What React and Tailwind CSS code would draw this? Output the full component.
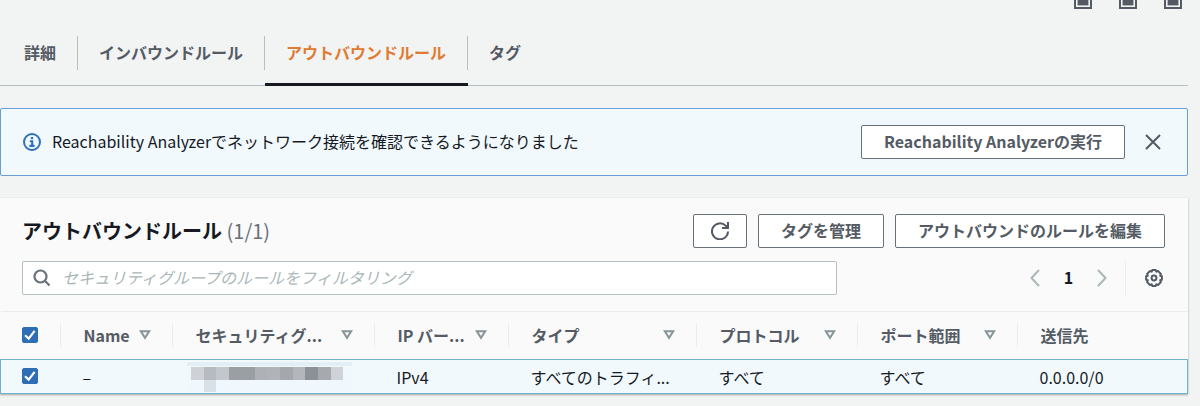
import React from "react";

const TABS = ["詳細", "インバウンドルール", "アウトバウンドルール", "タグ"];
const ACTIVE_TAB = 2;

const COLUMNS = [
  { label: "Name", width: "w-[112px]", sortable: true },
  { label: "セキュリティグ...", width: "w-[202px]", sortable: true },
  { label: "IP バー...", width: "w-[134px]", sortable: true },
  { label: "タイプ", width: "w-[188px]", sortable: true },
  { label: "プロトコル", width: "w-[161px]", sortable: true },
  { label: "ポート範囲", width: "w-[160px]", sortable: true },
  { label: "送信先", width: "w-auto", sortable: false },
];

const MOSAIC = [
  "#ced2d6", "#b6bbc1", "#c3c7cb", "#9a9fa4", "#9a9fa4", "#aeb2b6",
  "#b0b4b8", "#a4a8ad", "#b3b7bb", "#8c9197", "#a6aaaf", "#cfd3d7",
];

function CopyIcon() {
  return (
    <svg width="18" height="18" viewBox="0 0 18 18" fill="none" aria-hidden="true">
      <rect x="1" y="1" width="16" height="16" stroke="#545b64" strokeWidth="2" />
      <rect x="3.6" y="3.6" width="10.8" height="10.8" fill="#545b64" />
    </svg>
  );
}

function InfoIcon() {
  return (
    <svg width="18" height="18" viewBox="0 0 18 18" fill="none" aria-hidden="true">
      <circle cx="9" cy="9" r="8" stroke="#2d72b8" strokeWidth="2" />
      <rect x="7.8" y="4" width="2.4" height="2.2" fill="#2d72b8" />
      <path d="M6.8 8.2h2.4v4.6M6.4 12.9h5.2" stroke="#2d72b8" strokeWidth="2.1" />
    </svg>
  );
}

function CloseIcon() {
  return (
    <svg width="16" height="16" viewBox="0 0 16 16" fill="none" stroke="#545b64" strokeWidth="2" aria-hidden="true">
      <path d="M1 1l14 14M15 1L1 15" />
    </svg>
  );
}

function RefreshIcon() {
  return (
    <svg width="18" height="18" viewBox="0 0 18 18" fill="none" stroke="#545b64" strokeWidth="2" aria-hidden="true">
      <path d="M17 9.5A8 8 0 1 1 14.6 3.6L16 5" />
      <path d="M17 0v6h-6" />
      <path d="M13.5 5.5L17 2v4z" fill="#545b64" stroke="none" />
    </svg>
  );
}

function SearchIcon() {
  return (
    <svg width="18" height="18" viewBox="0 0 18 18" fill="none" stroke="#687078" strokeWidth="2.2" aria-hidden="true">
      <circle cx="7.5" cy="7.5" r="6" />
      <path d="M11.8 11.8L16.5 16.5" />
    </svg>
  );
}

function Chevron({ flip }) {
  return (
    <svg width="10" height="18" viewBox="0 0 10 18" fill="none" stroke="#aab7b8" strokeWidth="2" aria-hidden="true">
      <path d={flip ? "M1 1l7.5 8L1 17" : "M9 1L1.5 9 9 17"} />
    </svg>
  );
}

function GearIcon() {
  return (
    <svg width="18" height="18" viewBox="0 0 18 18" fill="none" stroke="#545b64" strokeWidth="2" strokeLinejoin="round" aria-hidden="true">
      <path d="M7.3 1.1h3.4l.6 1.6 1.7-.7 2.9 2.9-.7 1.8 1.7.6v3.4l-1.7.6.7 1.8-2.9 2.9-1.7-.7-.6 1.6H7.3l-.6-1.6-1.7.7-2.9-2.9.7-1.8-1.7-.6V7.3l1.7-.6-.7-1.8L5 2l1.7.7z" />
      <circle cx="9" cy="9" r="2.4" />
    </svg>
  );
}

function SortIcon() {
  return (
    <svg width="12" height="10" viewBox="0 0 12 10" fill="none" stroke="#879596" strokeWidth="2" aria-hidden="true">
      <path d="M1.8 1.2h8.4L6 7.8z" />
    </svg>
  );
}

function Checkbox({ label }) {
  return (
    <label className="grid w-4 place-items-center">
      <input
        type="checkbox"
        defaultChecked
        aria-label={label}
        className="peer col-start-1 row-start-1 size-4 appearance-none rounded-xs border border-[#aab7b8] bg-white checked:border-[#2d6eb4] checked:bg-[#2d6eb4]"
      />
      <svg
        width="16"
        height="16"
        viewBox="0 0 16 16"
        fill="none"
        stroke="#fff"
        strokeWidth="2.2"
        aria-hidden="true"
        className="pointer-events-none invisible col-start-1 row-start-1 peer-checked:visible"
      >
        <path d="M3 8.2l3.7 3.4L12.6 3.8" />
      </svg>
    </label>
  );
}

function Button({ children, label, padding = "px-[22px] pb-0.5" }) {
  return (
    <button
      type="button"
      aria-label={label}
      className={`flex h-[34px] shrink-0 items-center justify-center rounded-xs border border-[#687078] bg-white font-bold text-[#545b64] ${padding}`}
    >
      {children}
    </button>
  );
}

function HiddenId() {
  return (
    <svg width="165" height="30" viewBox="0 0 165 30" shapeRendering="crispEdges" role="img" aria-label="ID" className="block">
      <rect width="165" height="30" fill="#f0f8fd" />
      <rect width="165" height="4" fill="#e2f0f5" />
      {MOSAIC.map((color, i) => (
        <rect key={i} x={4 + i * 12.7} y="5" width="12.7" height="13" fill={color} />
      ))}
      <rect x="16.7" y="18" width="12.7" height="12" fill="#d9e1e8" />
    </svg>
  );
}

export default function App() {
  return (
    <div className="min-h-screen bg-[#f2f3f3] pr-3 font-['Noto_Sans_CJK_JP',sans-serif] text-base leading-6 text-[#16191f]">
      <div className="flex h-[9px] items-end justify-end gap-[27px] overflow-hidden pr-[6px]">
        {["1", "2", "3"].map((n) => (
          <button key={n} type="button" aria-label={`コピー ${n}`}>
            <CopyIcon />
          </button>
        ))}
      </div>

      <div role="tablist" className="mt-[27px] flex border-b border-[#b4bfbf] pl-[3px]">
        {TABS.map((tab, i) => (
          <button
            key={tab}
            type="button"
            role="tab"
            aria-selected={i === ACTIVE_TAB}
            className={`-mb-px flex flex-col border-b-3 pb-[13px] font-bold ${
              i === ACTIVE_TAB ? "border-[#16191f] text-[#e07b33]" : "border-transparent text-[#545b64]"
            }`}
          >
            <span
              className={`flex h-[34px] items-center px-[21px] pb-0.5 ${
                i < TABS.length - 1 ? "border-r border-[#b4bfbf]" : ""
              }`}
            >
              {tab}
            </span>
          </button>
        ))}
      </div>

      <div role="status" className="mt-[22px] flex h-[68px] items-center rounded-xs border border-[#6a9dd3] bg-[#f1f9fd] pr-[26px] pl-[22px]">
        <InfoIcon />
        <p className="ml-[11px] flex-1 pb-0.5">Reachability Analyzerでネットワーク接続を確認できるようになりました</p>
        <Button>Reachability Analyzerの実行</Button>
        <button type="button" aria-label="閉じる" className="ml-5">
          <CloseIcon />
        </button>
      </div>

      <section className="mt-[22px] bg-[#fafafa] shadow-[0_1px_2px_rgba(0,28,36,0.35)]">
        <div className="flex items-center gap-[11px] pt-4 pr-[23px] pl-[22px]">
          <h2 className="flex-1 text-xl leading-7 font-bold">
            アウトバウンドルール <span className="font-normal text-[#687078]">(1/1)</span>
          </h2>
          <Button label="更新" padding="px-[17px]">
            <RefreshIcon />
          </Button>
          <Button>タグを管理</Button>
          <Button>アウトバウンドのルールを編集</Button>
        </div>

        <div className="flex items-center justify-between pt-[13px] pr-[25px] pb-4 pl-[22px]">
          <label className="flex h-[34px] w-[815px] max-w-[72%] items-center gap-[11px] rounded-xs border border-[#b4bfbf] bg-white px-[10px]">
            <SearchIcon />
            <input
              type="search"
              aria-label="ルールをフィルタリング"
              placeholder="セキュリティグループのルールをフィルタリング"
              className="min-w-0 flex-1 bg-transparent pb-0.5 outline-none placeholder:text-[#aab7b8] placeholder:italic"
            />
          </label>
          <div className="flex items-center">
            <button type="button" aria-label="前へ">
              <Chevron />
            </button>
            <button type="button" className="w-[57px] pb-0.5 text-center font-bold">
              1
            </button>
            <button type="button" aria-label="次へ">
              <Chevron flip />
            </button>
            <span className="ml-[18px] flex h-[34px] items-center border-l border-[#eaeded] pl-[19px]">
              <button type="button" aria-label="設定">
                <GearIcon />
              </button>
            </span>
          </div>
        </div>

        <table className="w-full table-fixed border-collapse text-left">
          <thead>
            <tr className="h-12 border-t border-[#eaeded]">
              <th className="w-[59px] p-0 pb-0.5 pl-[21px]">
                <Checkbox label="すべて選択" />
              </th>
              {COLUMNS.map((column) => (
                <th key={column.label} className={`p-0 pb-0.5 ${column.width}`}>
                  <div className="flex h-6 items-center justify-between border-l border-[#eaeded] pr-[21px] pl-[23px] font-bold whitespace-nowrap text-[#545b64]">
                    {column.label}
                    {column.sortable && (
                      <button type="button" aria-label={`${column.label} で並べ替え`}>
                        <SortIcon />
                      </button>
                    )}
                  </div>
                </th>
              ))}
            </tr>
          </thead>
          <tbody>
            <tr className="h-[34px] border border-[#72b2cc] bg-[#f1f9fd]">
              <td className="pb-0.5 pl-[21px]">
                <Checkbox label="ルールを選択" />
              </td>
              <td className="pl-[23px]">–</td>
              <td className="pl-[15px]">
                <HiddenId />
              </td>
              <td className="pl-[23px]">IPv4</td>
              <td className="pl-[23px] whitespace-nowrap">すべてのトラフィ...</td>
              <td className="pl-[23px]">すべて</td>
              <td className="pl-[23px]">すべて</td>
              <td className="pl-[23px]">0.0.0.0/0</td>
            </tr>
          </tbody>
        </table>
      </section>
    </div>
  );
}
